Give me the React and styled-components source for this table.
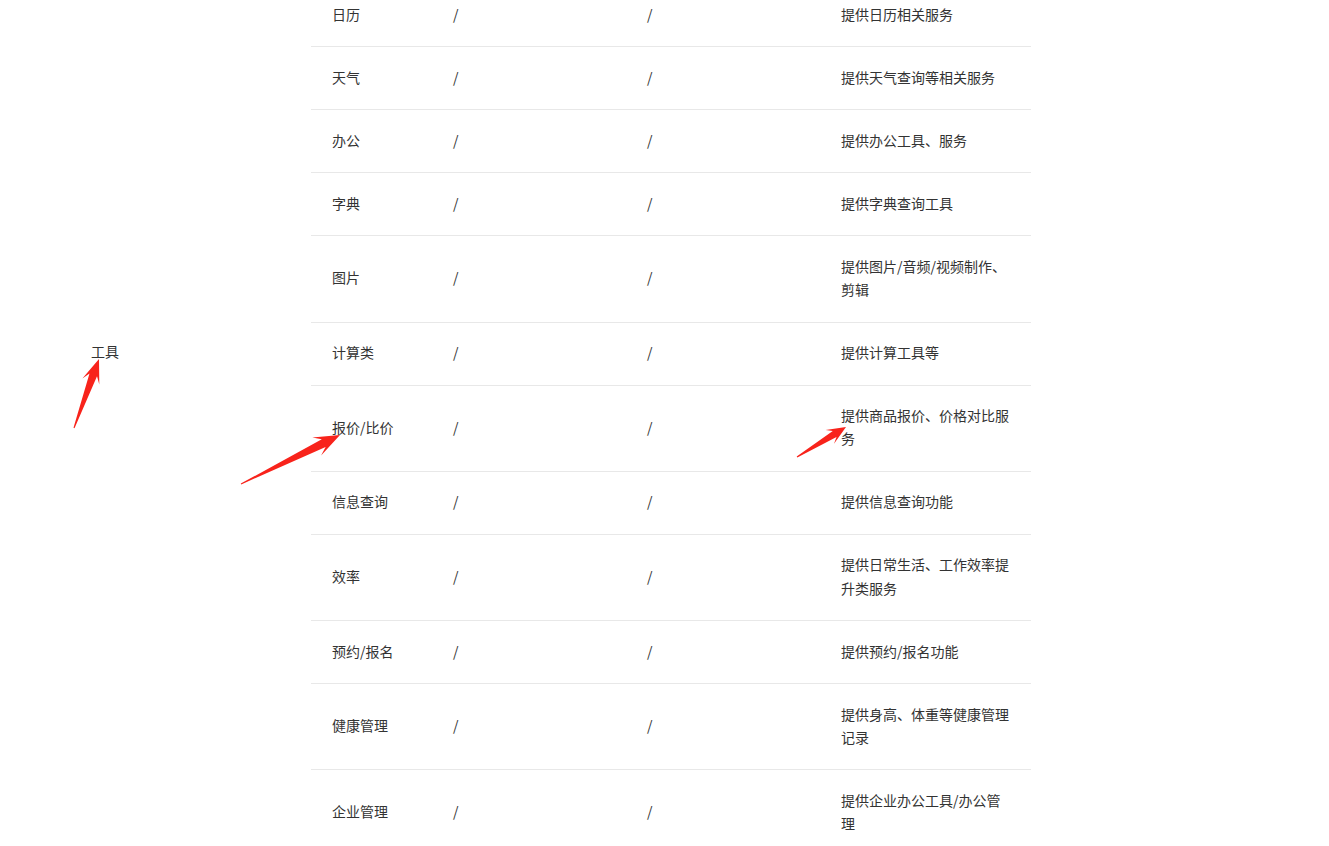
import React from 'react';
import styled, { createGlobalStyle } from 'styled-components';

const GlobalStyle = createGlobalStyle`
  html, body {
    margin: 0;
    padding: 0;
    overflow: hidden;
    background: #fff;
  }
  body {
    font-family: "Microsoft YaHei", "Noto Sans CJK SC", "Noto Sans", sans-serif;
    font-size: 14px;
    color: #333;
  }
`;

const Page = styled.div`
  position: relative;
  display: flex;
  margin-top: -16px;
  width: 1329px;
`;

const CategoryCell = styled.div`
  width: 311px;
  flex-shrink: 0;
  box-sizing: border-box;
  padding: 356px 0 0 91px;
  line-height: 23.1px;
`;

const Table = styled.div`
  width: 720px;
  display: flex;
  flex-direction: column;
`;

const Row = styled.div`
  display: grid;
  grid-template-columns: 121px 194px 194px 211px;
  align-items: center;
  padding: 18.5px 0 20.5px;
  border-bottom: 1px solid #e8e8e8;
  line-height: 23.1px;
`;

const Cell = styled.div`
  padding: 0 21px;
  color: #333;
`;

const Overlay = styled.svg`
  position: absolute;
  left: 0;
  top: 0;
  pointer-events: none;
`;

const rows = [
  ['日历', '提供日历相关服务'],
  ['天气', '提供天气查询等相关服务'],
  ['办公', '提供办公工具、服务'],
  ['字典', '提供字典查询工具'],
  ['图片', '提供图片/音频/视频制作、剪辑'],
  ['计算类', '提供计算工具等'],
  ['报价/比价', '提供商品报价、价格对比服务'],
  ['信息查询', '提供信息查询功能'],
  ['效率', '提供日常生活、工作效率提升类服务'],
  ['预约/报名', '提供预约/报名功能'],
  ['健康管理', '提供身高、体重等健康管理记录'],
  ['企业管理', '提供企业办公工具/办公管理'],
];

// tail -> tip arrow, thin at the tail, widening to a swept head
const arrowPoints = (x1, y1, x2, y2, head, headW, shaftW) => {
  const dx = x2 - x1;
  const dy = y2 - y1;
  const len = Math.hypot(dx, dy);
  const ux = dx / len;
  const uy = dy / len;
  const nx = -uy;
  const ny = ux;
  const at = (d, s) => [x1 + ux * d + nx * s, y1 + uy * d + ny * s];
  const neck = len - head * 0.7;
  const base = len - head;
  const pts = [
    at(0, 0.5),
    at(neck, shaftW / 2),
    at(base, headW / 2),
    at(len, 0),
    at(base, -headW / 2),
    at(neck, -shaftW / 2),
    at(0, -0.5),
  ];
  return pts.map((p) => p.map((v) => v.toFixed(1)).join(',')).join(' ');
};

// page is shifted up 16px, the viewBox adds it back
const arrows = [
  [74, 428, 99, 359, 24, 18, 8],
  [241, 484, 340, 435, 26, 20, 8.5],
  [797, 457, 846, 427, 19, 16, 7],
];

const App = () => (
  <>
    <GlobalStyle />
    <Page>
      <CategoryCell>工具</CategoryCell>
      <Table>
        {rows.map(([name, desc]) => (
          <Row key={name}>
            <Cell>{name}</Cell>
            <Cell>/</Cell>
            <Cell>/</Cell>
            <Cell>{desc}</Cell>
          </Row>
        ))}
      </Table>
      <Overlay width="1329" height="900" viewBox="0 -16 1329 900">
        {arrows.map((a, i) => (
          <polygon key={i} points={arrowPoints(...a)} fill="#f8231b" />
        ))}
      </Overlay>
    </Page>
  </>
);

export default App;
